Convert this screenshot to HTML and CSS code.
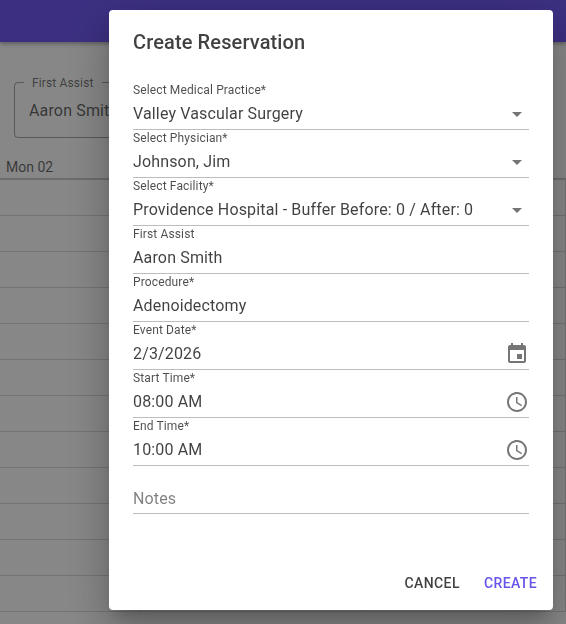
FILE: index.html
```html
<!DOCTYPE html>
<html>
    <head>
        <title>Create Reservation</title>
        <meta name="viewport" content="width=device-width, initial-scale=1">
        <link rel="stylesheet" href="styles.css">
    </head>
    <body>
        <div class="page">
            <div class="topbar"></div>
            <div class="filters">
                <div class="outlined">
                    <span class="outlined-label">First Assist</span>
                    <span class="outlined-value">Aaron Smith</span>
                </div>
            </div>
            <div class="calendar">
                <div class="day-head">Mon 02</div>
                <div class="grid">
                    <div class="cell"></div><div class="cell"></div><div class="cell"></div>
                    <div class="cell"></div><div class="cell"></div><div class="cell"></div>
                    <div class="cell"></div><div class="cell"></div><div class="cell"></div>
                    <div class="cell"></div><div class="cell"></div><div class="cell"></div>
                    <div class="cell"></div><div class="cell"></div><div class="cell"></div>
                    <div class="cell"></div><div class="cell"></div><div class="cell"></div>
                    <div class="cell"></div><div class="cell"></div><div class="cell"></div>
                    <div class="cell"></div><div class="cell"></div><div class="cell"></div>
                    <div class="cell"></div><div class="cell"></div><div class="cell"></div>
                    <div class="cell"></div><div class="cell"></div><div class="cell"></div>
                    <div class="cell"></div><div class="cell"></div><div class="cell"></div>
                    <div class="cell"></div><div class="cell"></div><div class="cell"></div>
                </div>
            </div>
        </div>

        <div class="backdrop"></div>

        <div class="dialog">
            <h2 class="dialog-title">Create Reservation</h2>
            <div class="form">
                <div class="field">
                    <label class="field-label">Select Medical Practice*</label>
                    <div class="field-input">
                        <span class="field-value">Valley Vascular Surgery</span>
                        <svg class="caret" viewBox="0 0 24 24"><path d="M7 10l5 5 5-5z"/></svg>
                    </div>
                </div>
                <div class="field">
                    <label class="field-label">Select Physician*</label>
                    <div class="field-input">
                        <span class="field-value">Johnson, Jim</span>
                        <svg class="caret" viewBox="0 0 24 24"><path d="M7 10l5 5 5-5z"/></svg>
                    </div>
                </div>
                <div class="field">
                    <label class="field-label">Select Facility*</label>
                    <div class="field-input">
                        <span class="field-value">Providence Hospital - Buffer Before: 0 / After: 0</span>
                        <svg class="caret" viewBox="0 0 24 24"><path d="M7 10l5 5 5-5z"/></svg>
                    </div>
                </div>
                <div class="field">
                    <label class="field-label">First Assist</label>
                    <div class="field-input">
                        <span class="field-value">Aaron Smith</span>
                    </div>
                </div>
                <div class="field">
                    <label class="field-label">Procedure*</label>
                    <div class="field-input">
                        <span class="field-value">Adenoidectomy</span>
                    </div>
                </div>
                <div class="field">
                    <label class="field-label">Event Date*</label>
                    <div class="field-input">
                        <span class="field-value">2/3/2026</span>
                        <svg class="icon" viewBox="0 0 24 24"><path d="M17 12h-5v5h5v-5zM16 1v2H8V1H6v2H5c-1.11 0-1.99.9-1.99 2L3 19c0 1.1.89 2 2 2h14c1.1 0 2-.9 2-2V5c0-1.1-.9-2-2-2h-1V1h-2zm3 18H5V8h14v11z"/></svg>
                    </div>
                </div>
                <div class="field">
                    <label class="field-label">Start Time*</label>
                    <div class="field-input">
                        <span class="field-value">08:00 AM</span>
                        <svg class="icon" viewBox="0 0 24 24"><path d="M11.99 2C6.47 2 2 6.48 2 12s4.47 10 9.99 10C17.52 22 22 17.52 22 12S17.52 2 11.99 2zM12 20c-4.42 0-8-3.58-8-8s3.58-8 8-8 8 3.58 8 8-3.58 8-8 8z"/><path d="M12.5 7H11v6l5.25 3.15.75-1.23-4.5-2.67z"/></svg>
                    </div>
                </div>
                <div class="field">
                    <label class="field-label">End Time*</label>
                    <div class="field-input">
                        <span class="field-value">10:00 AM</span>
                        <svg class="icon" viewBox="0 0 24 24"><path d="M11.99 2C6.47 2 2 6.48 2 12s4.47 10 9.99 10C17.52 22 22 17.52 22 12S17.52 2 11.99 2zM12 20c-4.42 0-8-3.58-8-8s3.58-8 8-8 8 3.58 8 8-3.58 8-8 8z"/><path d="M12.5 7H11v6l5.25 3.15.75-1.23-4.5-2.67z"/></svg>
                    </div>
                </div>
                <div class="field">
                    <label class="field-label"></label>
                    <div class="field-input notes-input">
                        <span class="field-value field-placeholder">Notes</span>
                    </div>
                </div>
            </div>
            <div class="actions">
                <button class="btn" type="button">CANCEL</button>
                <button class="btn btn-primary" type="button">CREATE</button>
            </div>
        </div>
    </body>
</html>
```
FILE: styles.css
```css
html, body{
    margin: 0;
    height: 100%;
    overflow: hidden;
}
body{
    font-family: Roboto, "Liberation Sans", sans-serif;
    background-color: #fff;
    color: rgba(0, 0, 0, 0.87);
}
.topbar{
    height: 42px;
    background-color: #715af5;
    box-shadow: 0 2px 4px rgba(0, 0, 0, 0.3);
}
.filters{
    padding: 40px 0 0 14px;
}
.outlined{
    width: 300px;
    height: 56px;
    box-sizing: border-box;
    border: 1px solid rgba(0, 0, 0, 0.35);
    border-radius: 4px;
    padding: 18px 14px 0 14px;
    position: relative;
}
.outlined-label{
    position: absolute;
    top: -7px;
    left: 9px;
    padding: 0 8px 0 8px;
    background-color: #fff;
    font-size: 12px;
    line-height: 14px;
    letter-spacing: 0.13px;
    color: rgba(0, 0, 0, 0.55);
}
.outlined-value{
    font-size: 16px;
    line-height: 19px;
    letter-spacing: 0.15px;
    color: rgba(0, 0, 0, 0.62);
}
.calendar{
    margin-top: 19px;
}
.day-head{
    height: 23px;
    box-sizing: border-box;
    padding: 1px 0 0 6px;
    font-size: 14px;
    line-height: 18px;
    color: rgba(0, 0, 0, 0.6);
    border-bottom: 2px solid #ccc;
}
.grid{
    display: grid;
    grid-template-columns: 140px 224px 1fr;
}
.cell{
    height: 36px;
    box-sizing: border-box;
    border-bottom: 1px solid #d9d9d9;
    border-right: 1px solid #d9d9d9;
}
.backdrop{
    position: fixed;
    top: 0;
    left: 0;
    right: 0;
    bottom: 0;
    background-color: rgba(0, 0, 0, 0.47);
}
.dialog{
    position: fixed;
    top: 10px;
    left: 109px;
    width: 444px;
    height: 600px;
    box-sizing: border-box;
    background-color: #fff;
    border-radius: 4px;
    box-shadow: 0 11px 15px -7px rgba(0, 0, 0, 0.2), 0 24px 38px 3px rgba(0, 0, 0, 0.14), 0 9px 46px 8px rgba(0, 0, 0, 0.12);
    display: flex;
    flex-direction: column;
}
.dialog-title{
    margin: 0;
    padding: 20px 24px 0 24px;
    font-size: 20px;
    font-weight: 500;
    line-height: 24px;
    letter-spacing: 0.12px;
    color: rgba(0, 0, 0, 0.75);
}
.form{
    padding: 28px 24px 0 24px;
}
.field{
    height: 48px;
    box-sizing: border-box;
    border-bottom: 1px solid #bdbdbd;
}
.field-label{
    display: block;
    height: 14px;
    padding-top: 1px;
    box-sizing: content-box;
    font-size: 12px;
    line-height: 14px;
    letter-spacing: 0.13px;
    color: rgba(0, 0, 0, 0.7);
}
.field-input{
    display: flex;
    align-items: center;
    justify-content: space-between;
    height: 32px;
}
.notes-input{
    padding-top: 1px;
}
.field-value{
    font-size: 16px;
    line-height: 19px;
    letter-spacing: 0.15px;
    color: rgba(0, 0, 0, 0.75);
}
.field-placeholder{
    color: rgba(0, 0, 0, 0.5);
}
.caret{
    width: 24px;
    height: 24px;
    margin-top: 2px;
    fill: rgba(0, 0, 0, 0.54);
}
.icon{
    width: 24px;
    height: 24px;
    margin-top: 2px;
    fill: rgba(0, 0, 0, 0.54);
}
.actions{
    margin-top: auto;
    display: flex;
    justify-content: flex-end;
    gap: 8px;
    padding: 0 8px 9px 8px;
}
.btn{
    border: none;
    background: none;
    padding: 6px 8px;
    height: 36px;
    font-family: inherit;
    font-size: 14px;
    font-weight: 500;
    letter-spacing: 0.4px;
    color: rgba(0, 0, 0, 0.75);
}
.btn-primary{
    color: #6554e8;
}
```
